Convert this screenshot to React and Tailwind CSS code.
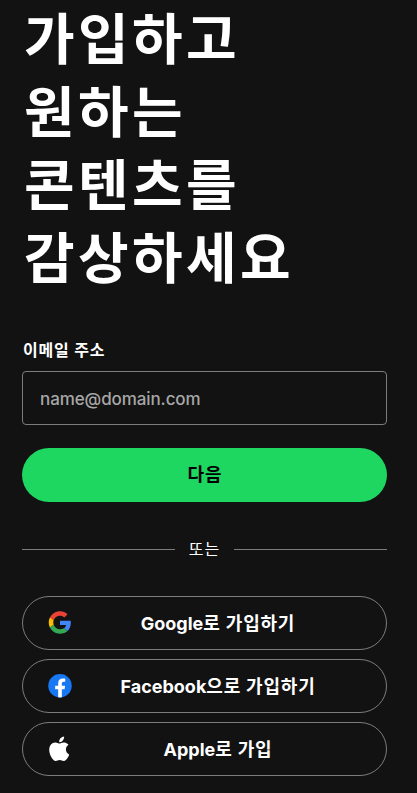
function GoogleIcon() {
  return (
    <svg viewBox="-1.5 -.5 51 51" className="size-6 shrink-0">
      <path fill="#EA4335" d="M24 9.5c3.54 0 6.71 1.22 9.21 3.6l6.85-6.85C35.9 2.38 30.47 0 24 0 14.62 0 6.51 5.38 2.56 13.22l7.98 6.19C12.43 13.72 17.74 9.5 24 9.5z" />
      <path fill="#4285F4" d="M46.98 24.55c0-1.57-.15-3.09-.38-4.55H24v9.02h12.94c-.58 2.96-2.26 5.48-4.78 7.18l7.73 6c4.51-4.18 7.09-10.36 7.09-17.65z" />
      <path fill="#FBBC05" d="M10.53 28.59A14.5 14.5 0 0 1 9.77 24c0-1.6.27-3.14.76-4.59l-7.98-6.19A23.9 23.9 0 0 0 0 24c0 3.88.92 7.54 2.56 10.78l7.97-6.19z" />
      <path fill="#34A853" d="M24 48c6.48 0 11.93-2.13 15.89-5.81l-7.73-6c-2.15 1.45-4.92 2.3-8.16 2.3-6.26 0-11.57-4.22-13.47-9.91l-7.98 6.19C6.51 42.62 14.62 48 24 48z" />
    </svg>
  );
}

function FacebookIcon() {
  return (
    <svg viewBox="-.25 0 24.5 24.5" className="size-6 shrink-0">
      <circle cx="12" cy="12" r="12" fill="#1877F2" />
      <path fill="#fff" d="M16.67 15.47 17.2 12h-3.33V9.75c0-.95.47-1.87 1.96-1.87h1.51V4.92s-1.37-.23-2.69-.23c-2.74 0-4.53 1.66-4.53 4.67V12H7.08v3.47h3.04v8.38a12.1 12.1 0 0 0 3.75 0v-8.38z" />
    </svg>
  );
}

function AppleIcon() {
  return (
    <svg viewBox="1 .5 23.5 23.5" className="size-6 shrink-0 overflow-visible" fill="#fff">
      <path d="M12.152 6.896c-.948 0-2.415-1.078-3.96-1.04-2.04.027-3.91 1.183-4.961 3.014-2.117 3.675-.546 9.103 1.519 12.09 1.013 1.454 2.208 3.09 3.792 3.039 1.52-.065 2.09-.987 3.935-.987 1.831 0 2.35.987 3.96.948 1.637-.026 2.676-1.48 3.676-2.948 1.156-1.688 1.636-3.325 1.662-3.415-.039-.013-3.182-1.221-3.22-4.857-.026-3.04 2.48-4.494 2.597-4.559-1.429-2.09-3.623-2.324-4.39-2.376-2-.156-3.675 1.09-4.61 1.09zM15.53 3.83c.843-1.012 1.4-2.427 1.245-3.83-1.207.052-2.662.805-3.532 1.818-.78.896-1.454 2.338-1.273 3.714 1.338.104 2.715-.688 3.559-1.701" />
    </svg>
  );
}

const providers = [
  { name: "Google", action: "로 가입하기", Icon: GoogleIcon },
  { name: "Facebook", action: "으로 가입하기", Icon: FacebookIcon },
  { name: "Apple", action: "로 가입", Icon: AppleIcon },
];

export default function App() {
  return (
    <main className="h-[793px] overflow-hidden bg-[#121212] pl-[22px] pr-[30px] font-['Inter','Noto_Sans_CJK_KR',sans-serif] text-white">
      <h1 className="pt-[3px] pl-0.5 text-[55px] leading-[73px] font-bold tracking-[3.4px]">
        가입하고
        <br />
        원하는
        <br />
        콘텐츠를
        <br />
        감상하세요
      </h1>

      <form className="mt-[45px]">
        <label htmlFor="email" className="block pl-px text-base leading-5 font-bold tracking-[0.8px]">
          이메일 주소
        </label>
        <input
          id="email"
          type="email"
          placeholder="name@domain.com"
          className="mt-[11px] block h-[54px] w-full rounded border border-[#7c7c7c] bg-[#121212] px-[17px] pt-0.5 text-[17px] font-medium tracking-[-0.1px] placeholder:text-[#a7a7a7]"
        />
        <button type="button" className="mt-[23px] block h-[54px] w-full rounded-full bg-[#1ed760] pl-px text-lg font-bold tracking-[1px] text-black">
          다음
        </button>
      </form>

      <div className="mt-[36px] flex h-[22px] items-center gap-[14px] text-base">
        <span className="h-px flex-1 bg-[#7c7c7c]" />
        <span className="tracking-[1px]">또는</span>
        <span className="h-px flex-1 bg-[#7c7c7c]" />
      </div>

      <div className="mt-[36px] flex flex-col gap-[9px]">
        {providers.map(({ name, action, Icon }) => (
          <button key={name} type="button" className="flex h-[54px] items-center rounded-full border border-[#7c7c7c] pr-[22px] pl-[25px] text-lg font-bold">
            <Icon />
            <span className="flex-1 pt-px text-center tracking-[0.8px]">
              <span className="tracking-normal">{name}</span>
              {action}
            </span>
          </button>
        ))}
      </div>
    </main>
  );
}
